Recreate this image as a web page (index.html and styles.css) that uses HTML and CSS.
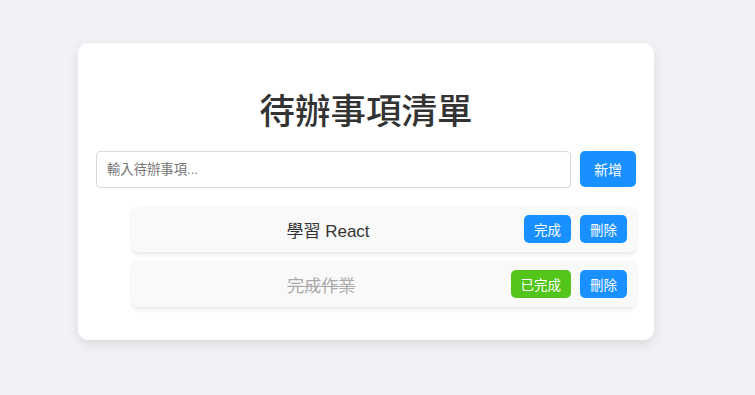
FILE: index.html
```html
<!DOCTYPE html>
<html lang="zh-Hant">
<head>
    <meta charset="UTF-8">
    <meta name="viewport" content="width=device-width, initial-scale=1.0">
    <title>待辦事項清單</title>
    <link rel="stylesheet" href="styles.css">
</head>
<body>
    <!-- Todo Card -->
    <div class="todo-app">
        <h1 class="title">待辦事項清單</h1>

        <form class="add-form" onsubmit="return false">
            <input type="text" class="add-input" placeholder="輸入待辦事項...">
            <button type="submit" class="btn btn-add">新增</button>
        </form>

        <ul class="todo-list">
            <li class="todo-item">
                <span class="todo-text">學習 React</span>
                <button class="btn btn-toggle">完成</button>
                <button class="btn btn-delete">刪除</button>
            </li>
            <li class="todo-item done">
                <span class="todo-text">完成作業</span>
                <button class="btn btn-toggle">已完成</button>
                <button class="btn btn-delete">刪除</button>
            </li>
        </ul>
    </div>
</body>
</html>
```

FILE: styles.css
```css
/* Reset CSS */
* {
    margin: 0;
    padding: 0;
    box-sizing: border-box;
}

body {
    font-family: "Liberation Sans", "Noto Sans CJK TC", sans-serif;
    background: #f0f2f5;
    color: #333;
    padding: 43px 0 0 78px;
    height: 100vh;
}

/* Card */
.todo-app {
    width: 576px;
    background: #fff;
    border-radius: 10px;
    padding: 18px;
    box-shadow: 0 4px 12px rgba(0, 0, 0, 0.1);
}

.title {
    font-size: 35.5px;
    line-height: 42px;
    font-weight: 500;
    text-align: center;
    color: #333;
    margin: 30px 0 18px;
}

/* Add form */
.add-form {
    display: flex;
    gap: 9px;
}

.add-input {
    flex: 1;
    height: 37px;
    padding: 0 10px;
    border: 1px solid #d9d9d9;
    border-radius: 4px;
    font-family: inherit;
    font-size: 13.33px;
    color: #333;
}

.add-input::placeholder {
    color: #757575;
}

.add-input:focus {
    outline: none;
    border-color: #1890ff;
}

.btn {
    border: none;
    border-radius: 5px;
    color: #fff;
    font-family: inherit;
    background: #1890ff;
    cursor: pointer;
}

.btn-add {
    height: 36px;
    padding: 0 14px;
    font-size: 14px;
}

/* List */
.todo-list {
    list-style: none;
    margin: 18px 0 15px;
    padding-left: 36px;
    display: flex;
    flex-direction: column;
    gap: 9px;
}

.todo-item {
    display: flex;
    align-items: center;
    gap: 9px;
    height: 46px;
    padding: 0 9px;
    background: #f9f9f9;
    border-radius: 6px;
    box-shadow: 0 2px 4px rgba(0, 0, 0, 0.1);
}

.todo-text {
    flex: 1;
    text-align: center;
    font-size: 17px;
}

.todo-item .btn {
    height: 28px;
    padding: 0 10px;
    font-size: 13.5px;
}

.todo-item.done .todo-text {
    color: #aaa;
    text-decoration: line-through;
}

.todo-item.done .btn-toggle {
    background: #52c41a;
}
```
